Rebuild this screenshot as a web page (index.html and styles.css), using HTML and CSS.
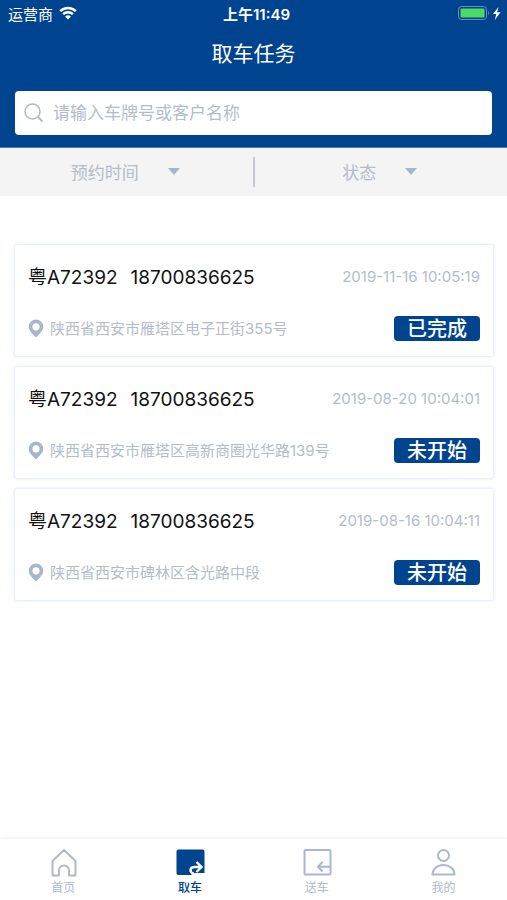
FILE: index.html
```html
<!DOCTYPE html>
<html lang="zh-CN">
<head>
<meta charset="utf-8">
<meta name="viewport" content="width=device-width, initial-scale=1">
<title>取车任务</title>
<link rel="stylesheet" href="styles.css">
</head>
<body>
<header class="header">
  <div class="status">
    <div class="carrier">
      <span>运营商</span>
      <svg width="18" height="14" viewBox="0 0 18 14" fill="none" stroke="#fff" stroke-width="2.4" aria-hidden="true">
        <path d="M1.2 5.2a11 11 0 0 1 15.6 0M4.1 8.2a7 7 0 0 1 9.8 0"/>
        <path d="M9 13.6 6.1 10.6a4.1 4.1 0 0 1 5.8 0z" fill="#fff" stroke="none"/>
      </svg>
    </div>
    <time class="clock">上午11:49</time>
    <div class="power">
      <svg width="44" height="15" viewBox="0 0 44 15" aria-hidden="true">
        <rect x="1.5" y="0.5" width="28" height="13" rx="3" fill="none" stroke="#6f8fb0"/>
        <rect x="3.500" y="2.500" width="24" height="9" rx="1" fill="#4cd964"/>
        <path d="M31 5q2 2 0 4z" fill="#6f8fb0"/>
        <path d="M41.500 1 36 8h3.300l-1.500 6 5.700-7.800h-3.400z" fill="#fff"/>
      </svg>
    </div>
  </div>
  <h1 class="title">取车任务</h1>
  <label class="search">
    <svg width="20" height="20" viewBox="0 0 20 20" fill="none" stroke="#b0bac8" stroke-width="1.500" aria-hidden="true">
      <circle cx="8.500" cy="8.500" r="7.500"/><path d="m14 14 4.500 4.500" stroke-width="2"/>
    </svg>
    <input class="search-input" type="search" placeholder="请输入车牌号或客户名称" aria-label="请输入车牌号或客户名称">
  </label>
</header>
<div class="filters">
  <button class="filter" type="button">预约时间<span class="caret"></span></button>
  <button class="filter" type="button">状态<span class="caret"></span></button>
</div>
<main class="list">
  <article class="card">
    <div class="row">
      <h2 class="who"><span>粤A72392</span><span>18700836625</span></h2>
      <time class="date">2019-11-16 10:05:19</time>
    </div>
    <div class="row">
      <p class="place"><svg width="16" height="19" viewBox="0 0 16 19" aria-hidden="true"><path fill-rule="evenodd" d="M8 0.500a7.300 7.300 0 0 0-7.300 7.300c0 4.200 4 7.200 7.300 10.700 3.300-3.500 7.300-6.500 7.300-10.700A7.300 7.300 0 0 0 8 .5zm0 3.700a3.600 3.600 0 1 1 0 7.200 3.600 3.600 0 0 1 0-7.200z" fill="#a9b6ca"/></svg>陕西省西安市雁塔区电子正街355号</p>
      <button class="badge" type="button">已完成</button>
    </div>
  </article>
  <article class="card">
    <div class="row">
      <h2 class="who"><span>粤A72392</span><span>18700836625</span></h2>
      <time class="date">2019-08-20 10:04:01</time>
    </div>
    <div class="row">
      <p class="place"><svg width="16" height="19" viewBox="0 0 16 19" aria-hidden="true"><path fill-rule="evenodd" d="M8 0.500a7.300 7.300 0 0 0-7.300 7.300c0 4.200 4 7.200 7.300 10.700 3.300-3.500 7.300-6.500 7.300-10.700A7.300 7.300 0 0 0 8 .5zm0 3.700a3.600 3.600 0 1 1 0 7.200 3.600 3.600 0 0 1 0-7.200z" fill="#a9b6ca"/></svg>陕西省西安市雁塔区高新商圈光华路139号</p>
      <button class="badge" type="button">未开始</button>
    </div>
  </article>
  <article class="card">
    <div class="row">
      <h2 class="who"><span>粤A72392</span><span>18700836625</span></h2>
      <time class="date">2019-08-16 10:04:11</time>
    </div>
    <div class="row">
      <p class="place"><svg width="16" height="19" viewBox="0 0 16 19" aria-hidden="true"><path fill-rule="evenodd" d="M8 0.500a7.300 7.300 0 0 0-7.300 7.300c0 4.200 4 7.200 7.300 10.700 3.300-3.500 7.300-6.500 7.300-10.700A7.300 7.300 0 0 0 8 .5zm0 3.700a3.600 3.600 0 1 1 0 7.200 3.600 3.600 0 0 1 0-7.200z" fill="#a9b6ca"/></svg>陕西省西安市碑林区含光路中段</p>
      <button class="badge" type="button">未开始</button>
    </div>
  </article>
</main>
<nav class="tabs">
  <a class="tab" href="#home">
    <svg width="30" height="30" viewBox="0 0 30 30" fill="none" stroke="#b0b9cc" stroke-width="2" stroke-linejoin="round" aria-hidden="true"><path d="M4.500 13 16 2l11.500 11v14.500H21v-5a5 5 0 0 0-10 0v5H4.500z"/></svg>
    首页
  </a>
  <a class="tab tab-active" href="#pickup" aria-current="page">
    <svg width="30" height="30" viewBox="0 0 30 30" fill="none" aria-hidden="true"><path d="M3.500 1.500h24a2 2 0 0 1 2 2V25H20l-4 2H3.500a2 2 0 0 1-2-2V3.500a2 2 0 0 1 2-2z" fill="#00438f"/><path d="M19 26c-5-1.500-4.500-7 .5-7H26M21.500 14l5 5-5 5" stroke="#fff" stroke-width="2.400"/></svg>
    取车
  </a>
  <a class="tab" href="#deliver">
    <svg width="30" height="30" viewBox="0 0 30 30" fill="none" stroke="#a9b8cc" stroke-width="2" stroke-linejoin="round" aria-hidden="true"><rect x="2.500" y="2" width="26" height="24.500" rx="1"/><path d="M28 18.800H16M20.500 14 16 18.800l4.500 4.700"/></svg>
    送车
  </a>
  <a class="tab" href="#me">
    <svg width="30" height="30" viewBox="0 0 30 30" fill="none" stroke="#a9b8cc" stroke-width="2" stroke-linejoin="round" aria-hidden="true"><circle cx="14.500" cy="7.500" r="5.500"/><path d="M3.500 26.500c0-5.500 4.800-9.500 11-9.500s11 4 11 9.500z"/></svg>
    我的
  </a>
</nav>
</body>
</html>
```

FILE: styles.css
```css
* {
  box-sizing: border-box;
}

body {
  margin: 0;
  min-height: 100vh;
  display: flex;
  flex-direction: column;
  background: #fff;
  color: #111;
  font-family: Inter, "Noto Sans CJK SC", sans-serif;
}

h1, h2, p {
  margin: 0;
  font-weight: 400;
}

svg {
  display: block;
  flex: none;
}

button {
  border: 0;
  font-family: inherit;
}

.header {
  padding: 0 15px 12px;
  background: #00438f;
  border-bottom: 1px solid #4a78b0;
  color: #fff;
}

.status {
  display: grid;
  grid-template-columns: 1fr auto 1fr;
  align-items: center;
  height: 26px;
  margin: 0 -9px 0 -7px;
  font-size: 15px;
}

.carrier {
  display: flex;
  align-items: center;
  gap: 6px;
}

.clock {
  padding-left: 4px;
  font-weight: 600;
}

.power {
  justify-self: end;
}

.title {
  height: 65px;
  padding-top: 12px;
  font-size: 21px;
  line-height: 32px;
  text-align: center;
}

.search {
  display: flex;
  align-items: center;
  gap: 9px;
  height: 44px;
  padding: 0 9px;
  border-radius: 4px;
  background: #fff;
}

.search-input {
  flex: 1;
  min-width: 0;
  padding: 0;
  border: 0;
  outline: 0;
  background: none;
  color: #333;
  font-family: inherit;
  font-size: 17px;
}

.search-input::placeholder {
  color: #b4bcc9;
}

.filters {
  display: flex;
  height: 48px;
  padding: 9px 0;
  background: #f4f4f4;
}

.filter {
  flex: 1;
  display: flex;
  align-items: center;
  justify-content: center;
  gap: 29px;
  padding: 0 2px 2px 0;
  background: none;
  color: #b4bcc9;
  font-size: 17px;
}

.filter + .filter {
  border-left: 2px solid #c5c8d2;
}

.caret {
  border: 6px solid transparent;
  border-top: 7px solid #a9b6c6;
  border-bottom: 0;
}

.list {
  flex: 1;
  display: flex;
  flex-direction: column;
  gap: 11px;
  padding: 49px 14px 24px 15px;
}

.card {
  display: flex;
  flex-direction: column;
  gap: 23px;
  padding: 18px 13px 15px;
  border-radius: 2px;
  box-shadow: 0 0 3px 1px #dfe7fa;
}

.row {
  display: flex;
  align-items: center;
  justify-content: space-between;
}

.who {
  display: flex;
  gap: 13px;
  font-size: 19px;
  line-height: 30px;
}

.date {
  padding-bottom: 3px;
  color: #b4bcc9;
  font-size: 15px;
}

.place {
  display: flex;
  align-items: center;
  gap: 6px;
  color: #b4bcc9;
  font-size: 15px;
  line-height: 24px;
}

.badge {
  padding: 1px 13px 0;
  border-radius: 4px;
  background: #00438f;
  color: #fff;
  font-size: 20px;
  font-weight: 500;
  line-height: 24px;
}

.tabs {
  display: flex;
  height: 61px;
  box-shadow: 0 -1px 3px #eee;
}

.tab {
  flex: 1;
  display: flex;
  flex-direction: column;
  align-items: center;
  gap: 2px;
  padding-top: 9px;
  color: #b0b9cc;
  font-size: 12px;
  line-height: 16px;
  text-decoration: none;
}

.tab-active {
  color: #00438f;
  font-weight: 500;
}
```
